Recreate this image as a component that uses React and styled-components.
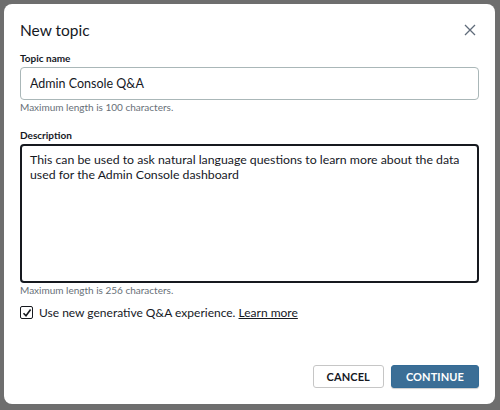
import styled, { createGlobalStyle } from "styled-components";

const GlobalStyle = createGlobalStyle`
  html, body {
    margin: 0;
    padding: 0;
    background: #6e6e6e;
    font-family: Lato, "Open Sans", sans-serif;
  }
  * { box-sizing: border-box; }
`;

function App() {
  return (
    <Page>
      <GlobalStyle />
      <Modal>
        <Header>
          <Title>New topic</Title>
          <CloseButton aria-label="Close">
            <svg width="12" height="12" viewBox="0 0 12 12">
              <path d="M1 1 L11 11 M11 1 L1 11" stroke="#5f6b7a" strokeWidth="1.3" fill="none" />
            </svg>
          </CloseButton>
        </Header>

        <Field>
          <Label>Topic name</Label>
          <Input defaultValue="Admin Console Q&A" />
          <Hint>Maximum length is 100 characters.</Hint>
        </Field>

        <Field>
          <Label>Description</Label>
          <TextArea defaultValue="This can be used to ask natural language questions to learn more about the data used for the Admin Console dashboard" />
          <Hint>Maximum length is 256 characters.</Hint>
        </Field>

        <CheckRow>
          <Box>
            <svg width="10" height="10" viewBox="0 0 10 10">
              <path d="M1.5 5.2 L4 7.8 L8.6 1.6" stroke="#16191f" strokeWidth="1.6" fill="none" />
            </svg>
          </Box>
          <span>
            Use new generative Q&amp;A experience. <LearnMore href="#">Learn more</LearnMore>
          </span>
        </CheckRow>

        <Footer>
          <Button>CANCEL</Button>
          <Button primary>CONTINUE</Button>
        </Footer>
      </Modal>
    </Page>
  );
}

export default App;

const Page = styled.div`
  width: 500px;
  height: 410px;
  padding: 4px 5px 6px 4px;
`;

const Modal = styled.div`
  width: 100%;
  height: 100%;
  background: #fff;
  border-radius: 8px;
  padding: 15px 16px 0 16px;
  display: flex;
  flex-direction: column;
  color: #16191f;
`;

const Header = styled.div`
  display: flex;
  align-items: center;
  justify-content: space-between;
  height: 22px;
  margin-bottom: 11px;
`;

const Title = styled.h2`
  margin: 0;
  font-size: 15.5px;
  font-weight: 400;
`;

const CloseButton = styled.button`
  border: none;
  background: none;
  padding: 0;
  margin-right: 2px;
  width: 14px;
  height: 14px;
  display: flex;
  align-items: center;
  justify-content: center;
`;

const Field = styled.div`
  display: flex;
  flex-direction: column;
  margin-bottom: 16px;
`;

const Label = styled.label`
  font-size: 10px;
  font-weight: 700;
  line-height: 13px;
  margin-bottom: 2px;
`;

const Input = styled.input`
  height: 33px;
  border: 1px solid #aab7b8;
  border-radius: 4px;
  padding: 0 9px;
  font-family: inherit;
  font-size: 12.5px;
  color: #16191f;
  outline: none;
`;

const TextArea = styled.textarea`
  height: 139px;
  border: 2px solid #16191f;
  border-radius: 4px;
  padding: 6px 8px;
  font-family: inherit;
  font-size: 12.3px;
  line-height: 15px;
  color: #16191f;
  resize: none;
  outline: none;
  display: block;
`;

const Hint = styled.div`
  font-size: 10px;
  color: #687078;
  margin-top: 1px;
  line-height: 12px;
`;

const CheckRow = styled.div`
  display: flex;
  align-items: center;
  gap: 6px;
  font-size: 12px;
  margin-top: -7px;
`;

const Box = styled.span`
  width: 13px;
  height: 13px;
  border: 1px solid #16191f;
  border-radius: 2px;
  display: flex;
  align-items: center;
  justify-content: center;
`;

const LearnMore = styled.a`
  color: #16191f;
  text-decoration: underline;
`;

const Footer = styled.div`
  margin-top: auto;
  margin-bottom: 16px;
  display: flex;
  justify-content: flex-end;
  gap: 7px;
`;

const Button = styled.button`
  height: 23px;
  padding: 0 ${(p) => (p.primary ? "14px" : "13px")};
  border-radius: 3px;
  font-family: inherit;
  font-size: 11px;
  font-weight: 700;
  letter-spacing: 0.1px;
  border: 1px solid ${(p) => (p.primary ? "#336b96" : "#c6c6c6")};
  background: ${(p) => (p.primary ? "#3b6e96" : "#fff")};
  color: ${(p) => (p.primary ? "#fff" : "#16191f")};
  box-shadow: ${(p) => (p.primary ? "0 1px 1px rgba(0,0,0,0.2)" : "none")};
`;
